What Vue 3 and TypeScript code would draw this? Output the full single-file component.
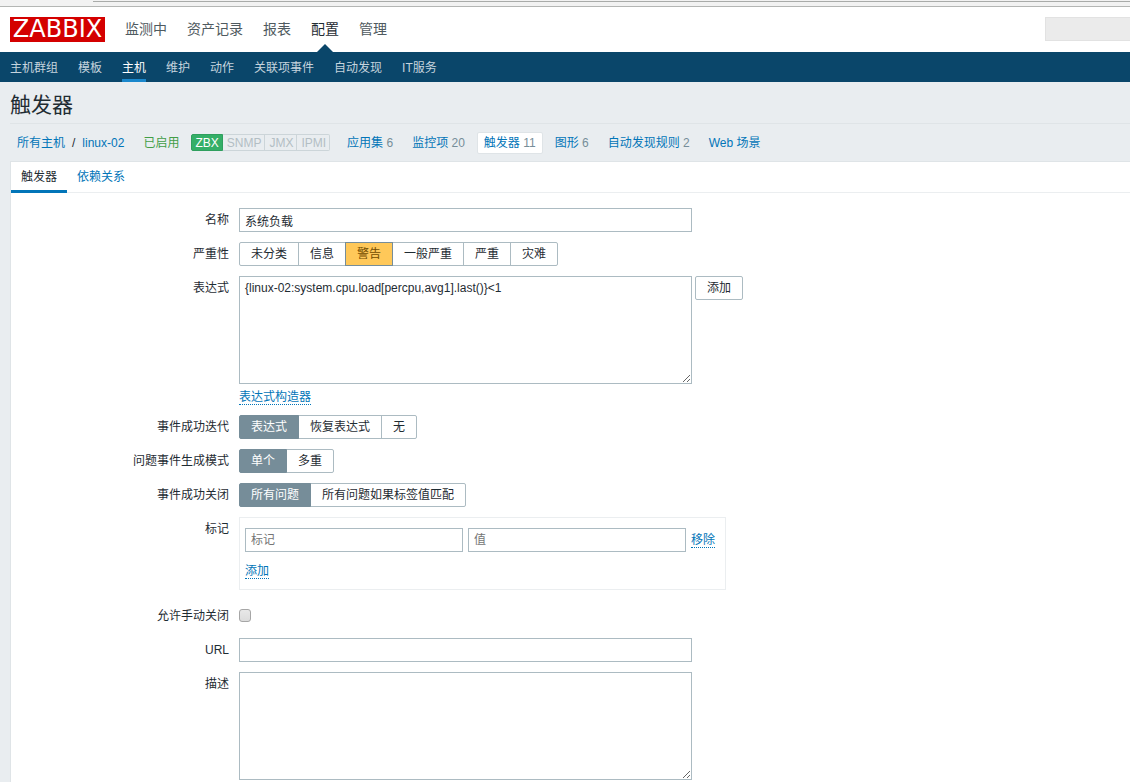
<script setup lang="ts">
import { ref } from 'vue'

interface Option {
  value: string
  label: string
}

interface HostLink {
  label: string
  count?: number
  active?: boolean
}

const mainMenu = ['监测中', '资产记录', '报表', '配置', '管理']
const activeMain = '配置'

const subMenu = ['主机群组', '模板', '主机', '维护', '动作', '关联项事件', '自动发现', 'IT服务']
const activeSub = '主机'

const interfaces = [
  { label: 'ZBX', available: true },
  { label: 'SNMP', available: false },
  { label: 'JMX', available: false },
  { label: 'IPMI', available: false },
]

const hostLinks: HostLink[] = [
  { label: '应用集', count: 6 },
  { label: '监控项', count: 20 },
  { label: '触发器', count: 11, active: true },
  { label: '图形', count: 6 },
  { label: '自动发现规则', count: 2 },
  { label: 'Web 场景' },
]

const severities: Option[] = [
  { value: 'none', label: '未分类' },
  { value: 'info', label: '信息' },
  { value: 'warning', label: '警告' },
  { value: 'average', label: '一般严重' },
  { value: 'high', label: '严重' },
  { value: 'disaster', label: '灾难' },
]
const recoveryModes: Option[] = [
  { value: 'expression', label: '表达式' },
  { value: 'recovery', label: '恢复表达式' },
  { value: 'none', label: '无' },
]
const problemModes: Option[] = [
  { value: 'single', label: '单个' },
  { value: 'multiple', label: '多重' },
]
const closeModes: Option[] = [
  { value: 'all', label: '所有问题' },
  { value: 'tags', label: '所有问题如果标签值匹配' },
]

const name = ref('系统负载')
const severity = ref('warning')
const expression = ref('{linux-02:system.cpu.load[percpu,avg1].last()}<1')
const recoveryMode = ref('expression')
const problemMode = ref('single')
const closeMode = ref('all')
const tagName = ref('')
const tagValue = ref('')
const manualClose = ref(false)
const url = ref('')
const description = ref('')
</script>

<template>
  <div class="page">
    <div class="browser-edge"><div class="address-edge"></div></div>

    <header class="top">
      <a class="logo" href="#">ZABBIX</a>
      <nav class="main-nav">
        <a
          v-for="item in mainMenu"
          :key="item"
          href="#"
          :class="{ active: item === activeMain }"
        >{{ item }}</a>
      </nav>
      <input class="search" type="text" aria-label="搜索" disabled />
    </header>

    <nav class="sub-nav">
      <a
        v-for="item in subMenu"
        :key="item"
        href="#"
        :class="{ active: item === activeSub }"
      >{{ item }}</a>
    </nav>

    <h1>触发器</h1>

    <div class="host-bar">
      <span class="crumbs"><a href="#">所有主机</a><span class="slash">/</span><a href="#">linux-02</a></span>
      <span class="enabled">已启用</span>
      <span class="badges">
        <span
          v-for="item in interfaces"
          :key="item.label"
          class="badge"
          :class="{ on: item.available }"
        >{{ item.label }}</span>
      </span>
      <span
        v-for="item in hostLinks"
        :key="item.label"
        class="host-link"
        :class="{ selected: item.active }"
      ><a href="#">{{ item.label }}</a><span v-if="item.count" class="count">{{ ' ' + item.count }}</span></span>
    </div>

    <main class="panel">
      <div class="tabs">
        <a href="#" class="tab active">触发器</a>
        <a href="#" class="tab">依赖关系</a>
      </div>

      <form class="form" @submit.prevent>
        <label class="caption" for="name">名称</label>
        <div class="field">
          <input id="name" v-model="name" class="text wide" type="text" />
        </div>

        <span id="severity-caption" class="caption">严重性</span>
        <div class="field segments" role="radiogroup" aria-labelledby="severity-caption">
          <label v-for="o in severities" :key="o.value" class="segment severity">
            <input v-model="severity" type="radio" name="severity" :value="o.value" />
            <span>{{ o.label }}</span>
          </label>
        </div>

        <label class="caption" for="expression">表达式</label>
        <div class="field">
          <div class="with-button">
            <textarea id="expression" v-model="expression" class="text wide" spellcheck="false"></textarea>
            <button type="button" class="button">添加</button>
          </div>
          <div class="builder"><button type="button" class="dotted">表达式构造器</button></div>
        </div>

        <span id="recovery-caption" class="caption">事件成功迭代</span>
        <div class="field segments" role="radiogroup" aria-labelledby="recovery-caption">
          <label v-for="o in recoveryModes" :key="o.value" class="segment">
            <input v-model="recoveryMode" type="radio" name="recovery" :value="o.value" />
            <span>{{ o.label }}</span>
          </label>
        </div>

        <span id="problem-caption" class="caption">问题事件生成模式</span>
        <div class="field segments" role="radiogroup" aria-labelledby="problem-caption">
          <label v-for="o in problemModes" :key="o.value" class="segment">
            <input v-model="problemMode" type="radio" name="problem" :value="o.value" />
            <span>{{ o.label }}</span>
          </label>
        </div>

        <span id="close-caption" class="caption">事件成功关闭</span>
        <div class="field segments" role="radiogroup" aria-labelledby="close-caption">
          <label v-for="o in closeModes" :key="o.value" class="segment">
            <input v-model="closeMode" type="radio" name="close" :value="o.value" />
            <span>{{ o.label }}</span>
          </label>
        </div>

        <span class="caption">标记</span>
        <div class="field">
          <div class="tag-box">
            <div class="tag-row">
              <input v-model="tagName" class="text" type="text" placeholder="标记" aria-label="标记" />
              <input v-model="tagValue" class="text" type="text" placeholder="值" aria-label="值" />
              <button type="button" class="dotted">移除</button>
            </div>
            <button type="button" class="dotted">添加</button>
          </div>
        </div>

        <label class="caption" for="manual-close">允许手动关闭</label>
        <div class="field check">
          <input id="manual-close" v-model="manualClose" type="checkbox" />
        </div>

        <label class="caption" for="url">URL</label>
        <div class="field">
          <input id="url" v-model="url" class="text wide" type="text" />
        </div>

        <label class="caption" for="description">描述</label>
        <div class="field">
          <textarea id="description" v-model="description" class="text wide"></textarea>
        </div>
      </form>
    </main>
  </div>
</template>

<style>
body {
  margin: 0;
  background: #e9edf0;
}
</style>

<style scoped>
* {
  box-sizing: border-box;
}

.page {
  display: flex;
  flex-direction: column;
  min-height: 100vh;
  background: #e9edf0;
  color: #1f2c33;
  font: 12px/16px "Liberation Sans", "Noto Sans CJK SC", sans-serif;
}

a {
  color: #0275b8;
  text-decoration: none;
}

input,
textarea,
button {
  margin: 0;
  color: inherit;
  font: inherit;
}

.browser-edge {
  height: 7px;
  padding: 1px 0 0 93px;
  background: #f2f2f2;
  border-bottom: 1px solid #b4b6b4;
}

.address-edge {
  height: 1px;
  background: #a9aba9;
}

.top {
  display: flex;
  align-items: flex-start;
  height: 45px;
  padding: 10px 0 0 10px;
  background: #fff;
}

.logo {
  width: 95px;
  height: 25px;
  background: #d40000;
  color: #fff;
  font: 24px/25px "DejaVu Sans", sans-serif;
  text-align: center;
}

.main-nav {
  display: flex;
  gap: 20px;
  height: 35px;
  margin-left: 20px;
  font-size: 14px;
  line-height: 24px;
}

.main-nav a {
  display: flex;
  flex-direction: column;
  align-items: center;
  justify-content: space-between;
  color: #4f5a60;
}

.main-nav a.active {
  color: #1f2c33;
}

.main-nav a.active::after {
  content: "";
  border: 8px solid transparent;
  border-top: 0;
  border-bottom-color: #0a466a;
}

.search {
  width: 85px;
  height: 24px;
  margin-left: auto;
  background: #ebebeb;
  border: 1px solid #e2e2e2;
  border-right: 0;
}

.sub-nav {
  display: flex;
  gap: 20px;
  height: 30px;
  padding: 0 10px;
  background: #0a466a;
  line-height: 32px;
}

.sub-nav a {
  height: 30px;
  color: #c5d4de;
}

.sub-nav a.active {
  box-shadow: inset 0 -3px #1a87cc;
  color: #fff;
}

h1 {
  height: 41px;
  margin: 0;
  padding: 0 10px;
  font-size: 21px;
  font-weight: 400;
  line-height: 46px;
}

.host-bar {
  display: flex;
  align-items: center;
  height: 38px;
  margin-left: 10px;
  border-top: 1px solid #dfe4e7;
  white-space: nowrap;
}

.crumbs {
  padding: 0 7px;
}

.slash {
  padding: 0 7px;
}

.enabled {
  margin-left: 5px;
  padding: 0 7px;
  color: #429e47;
}

.badges {
  display: flex;
  margin: 0 5px;
  padding-right: 5px;
}

.badge {
  height: 17px;
  padding: 0 3px 0 4px;
  border: 1px solid #ccd5d9;
  border-left: 0;
  color: #b3bec4;
  line-height: 17px;
}

.badge.on {
  padding: 0 3px;
  border: 1px solid #2f9f5e;
  border-radius: 2px 0 0 2px;
  background: #34af67;
  color: #fff;
}

.badge:last-child {
  border-radius: 0 2px 2px 0;
}

.host-link {
  margin-right: 5px;
  padding: 2px 6px;
  border: 1px solid transparent;
  border-radius: 2px;
}

.host-link.selected {
  background: #fff;
  border-color: #dfe4e7;
}

.count {
  color: #768d99;
}

.panel {
  flex: 1;
  margin-left: 10px;
  background: #fff;
  border: solid #dfe4e7;
  border-width: 1px 0 0 1px;
}

.tabs {
  display: flex;
  height: 31px;
  border-bottom: 1px solid #ebeef0;
  line-height: 30px;
}

.tab {
  height: 31px;
  padding: 0 10px;
}

.tab.active {
  border-bottom: 3px solid #0275b8;
  color: #1f2c33;
}

.form {
  display: grid;
  grid-template-columns: 218px minmax(0, 1fr);
  gap: 10px;
  padding: 15px 10px 2px 0;
}

.caption {
  line-height: 24px;
  text-align: right;
}

.text {
  display: block;
  width: 218px;
  height: 24px;
  padding: 0 5px;
  border: 1px solid #acbbc2;
  border-radius: 0;
  background: #fff;
  outline: 0;
}

.text::placeholder {
  color: #757575;
}

.text.wide {
  width: 453px;
  max-width: 100%;
}

textarea.text {
  height: 108px;
  padding: 3px 5px;
  overflow: auto;
  resize: both;
}

.with-button {
  display: flex;
  align-items: flex-start;
  gap: 3px;
}

.button {
  flex: none;
  height: 24px;
  padding: 0 11px;
  background: #fff;
  border: 1px solid #acbbc2;
  border-radius: 2px;
  line-height: 22px;
}

.builder {
  display: flex;
  align-items: flex-end;
  height: 21px;
}

.dotted {
  padding: 2px 0 0;
  background: none;
  border: 0;
  border-bottom: 1px dotted #0275b8;
  color: #0275b8;
  line-height: 13px;
}

.segments {
  display: flex;
}

.segment {
  height: 24px;
}

.segment + .segment {
  margin-left: -1px;
}

.segment input {
  position: absolute;
  opacity: 0;
  pointer-events: none;
}

.segment span {
  display: block;
  height: 24px;
  padding: 0 11px;
  border: 1px solid #acbbc2;
  line-height: 22px;
  white-space: nowrap;
}

.segment:first-child span {
  border-radius: 2px 0 0 2px;
}

.segment:last-child span {
  border-radius: 0 2px 2px 0;
}

.segment input:checked + span {
  position: relative;
  background: #768d99;
  border-color: #768d99;
  color: #fff;
}

.segment.severity input:checked + span {
  background: #ffc859;
  color: #734d00;
}

.tag-box {
  display: flex;
  flex-direction: column;
  align-items: flex-start;
  gap: 11px;
  width: 487px;
  max-width: 100%;
  height: 73px;
  margin-bottom: 4px;
  padding: 10px 5px;
  border: 1px solid #ebeef0;
}

.tag-row {
  display: flex;
  align-items: center;
  gap: 5px;
}

.check {
  display: flex;
  align-items: flex-start;
  padding-top: 5px;
}

.check input {
  width: 12px;
  height: 13px;
  appearance: none;
  background: linear-gradient(#e8e8e8, #dcdcdc);
  border: 1px solid #a6a6a6;
  border-radius: 3px;
}

.check input:checked {
  background: #0275b8;
}
</style>
